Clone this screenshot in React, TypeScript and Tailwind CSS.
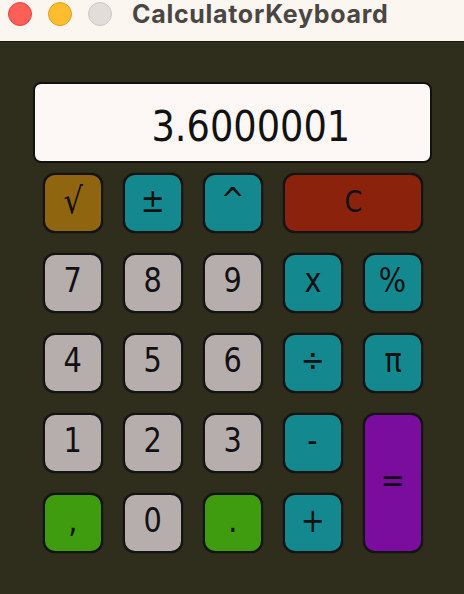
import React from "react";

type KeyProps = {
  label: string;
  bg: string;
  span?: string;
  text?: string;
};

function Key({ label, bg, span = "", text = "text-[34px] pb-[6px]" }: KeyProps) {
  return (
    <button
      className={`${bg} ${span} ${text} flex items-center justify-center rounded-[12px] border-2 border-[#141414] shadow-[0_0_1px_#000] text-[#111] leading-none font-['DejaVu_Sans_Condensed','DejaVu_Sans',sans-serif]`}
    >
      <span className="inline-block scale-x-[0.94]">{label}</span>
    </button>
  );
}

const grey = "bg-[#b6adad]";
const teal = "bg-[#14888f]";

export default function App() {
  return (
    <div className="w-[464px] h-[594px] flex flex-col bg-[#2f2e1c] overflow-hidden">
      <div className="h-[42px] bg-[#fcf6f1] flex items-start shrink-0 border-b border-[#1d1c10]">
        <div className="flex items-center gap-[16px] pl-[8px] pt-[2px]">
          <span className="w-[24px] h-[24px] rounded-full bg-[#fe5f57] border border-[#e2463f]" />
          <span className="w-[24px] h-[24px] rounded-full bg-[#febc2e] border border-[#dea123]" />
          <span className="w-[24px] h-[24px] rounded-full bg-[#e2ddd9] border border-[#cdc7c3]" />
        </div>
        <h1 className="ml-[20px] mt-[-1px] text-[25px] tracking-[0.7px] font-bold text-[#4a4644] font-['Inter',sans-serif] leading-[30px]">
          CalculatorKeyboard
        </h1>
      </div>

      <div className="flex flex-col px-[33px] pt-[40px]">
        <div className="h-[81px] w-[399px] bg-[#fdf8f5] border-2 border-[#111] rounded-[8px] flex items-center justify-end pr-[80px] pt-[8px]">
          <span className="inline-block origin-right scale-x-[0.95] text-[43px] leading-none text-[#111] font-['DejaVu_Sans_Condensed','DejaVu_Sans',sans-serif]">
            3.6000001
          </span>
        </div>

        <div className="grid grid-cols-[repeat(5,60px)] grid-rows-[repeat(5,60px)] gap-[20px] ml-[10px] mt-[10px]">
          <Key label="√" bg="bg-[#8f650f]" text="text-[36px] pb-[4px]" />
          <Key label="±" bg={teal} />
          <Key label="^" bg={teal} />
          <Key label="C" bg="bg-[#8a220c]" span="col-span-2" text="text-[30px] pb-[2px]" />

          <Key label="7" bg={grey} />
          <Key label="8" bg={grey} />
          <Key label="9" bg={grey} />
          <Key label="x" bg={teal} />
          <Key label="%" bg={teal} />

          <Key label="4" bg={grey} />
          <Key label="5" bg={grey} />
          <Key label="6" bg={grey} />
          <Key label="÷" bg={teal} />
          <Key label="π" bg={teal} />

          <Key label="1" bg={grey} />
          <Key label="2" bg={grey} />
          <Key label="3" bg={grey} />
          <Key label="-" bg={teal} />
          <Key label="=" bg="bg-[#7a0c9e]" span="row-span-2" />

          <Key label="," bg="bg-[#3f9c0e]" />
          <Key label="0" bg={grey} />
          <Key label="." bg="bg-[#3f9c0e]" />
          <Key label="+" bg={teal} />
        </div>
      </div>
    </div>
  );
}
